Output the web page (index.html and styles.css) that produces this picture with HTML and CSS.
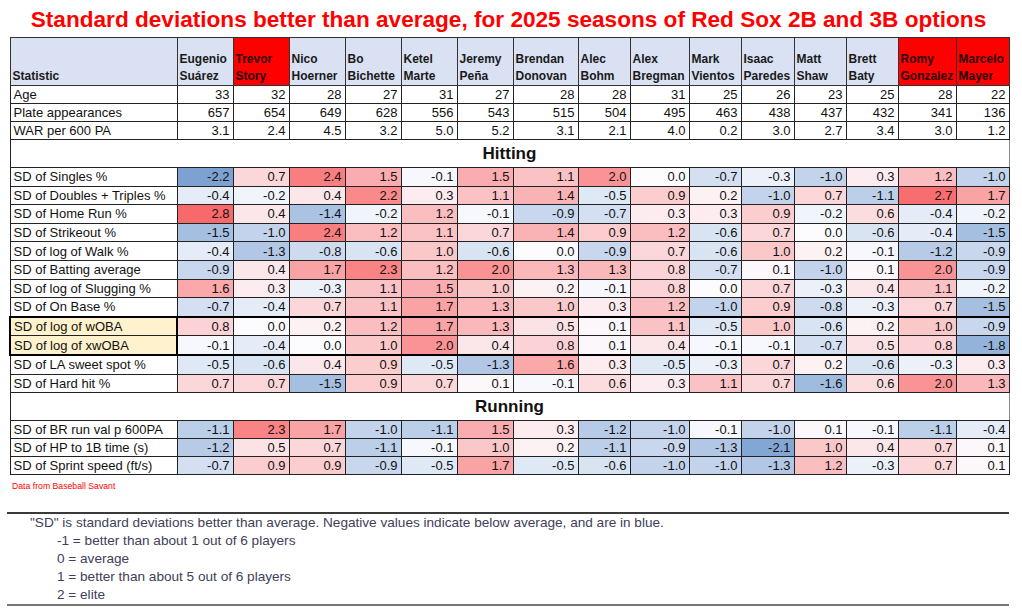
FILE: index.html
```html
<!DOCTYPE html>
<html lang="en">
<head>
<meta charset="utf-8">
<title>Red Sox 2B and 3B options</title>
<link rel="stylesheet" href="styles.css">
</head>
<body>
<div class="page">
  <h1 class="title">Standard deviations better than average, for 2025 seasons of Red Sox 2B and 3B options</h1>
  <table class="grid">
    <colgroup>
      <col class="w-stat">
      <col class="w56"><col class="w56"><col class="w56"><col class="w56"><col class="w56"><col class="w56">
      <col class="w65"><col class="w52"><col class="w59"><col class="w52"><col class="w53"><col class="w52"><col class="w52"><col class="w58"><col class="w53">
    </colgroup>
    <thead>
      <tr class="head">
        <th class="stat">Statistic</th>
        <th>Eugenio<br>Suárez</th>
        <th class="hl">Trevor<br>Story</th>
        <th>Nico<br>Hoerner</th>
        <th>Bo<br>Bichette</th>
        <th>Ketel<br>Marte</th>
        <th>Jeremy<br>Peña</th>
        <th>Brendan<br>Donovan</th>
        <th>Alec<br>Bohm</th>
        <th>Alex<br>Bregman</th>
        <th>Mark<br>Vientos</th>
        <th>Isaac<br>Paredes</th>
        <th>Matt<br>Shaw</th>
        <th>Brett<br>Baty</th>
        <th class="hl">Romy<br>Gonzalez</th>
        <th class="hl">Marcelo<br>Mayer</th>
      </tr>
    </thead>
    <tbody>
      <tr class="row"><td class="lbl">Age</td><td>33</td><td>32</td><td>28</td><td>27</td><td>31</td><td>27</td><td>28</td><td>28</td><td>31</td><td>25</td><td>26</td><td>23</td><td>25</td><td>28</td><td>22</td></tr>
      <tr class="row"><td class="lbl">Plate appearances</td><td>657</td><td>654</td><td>649</td><td>628</td><td>556</td><td>543</td><td>515</td><td>504</td><td>495</td><td>463</td><td>438</td><td>437</td><td>432</td><td>341</td><td>136</td></tr>
      <tr class="row"><td class="lbl">WAR per 600 PA</td><td>3.1</td><td>2.4</td><td>4.5</td><td>3.2</td><td>5.0</td><td>5.2</td><td>3.1</td><td>2.1</td><td>4.0</td><td>0.2</td><td>3.0</td><td>2.7</td><td>3.4</td><td>3.0</td><td>1.2</td></tr>
      <tr class="sec"><td colspan="16">Hitting</td></tr>
      <tr class="row hrow" data-scale="2.8"><td class="lbl">SD of Singles %</td><td>-2.2</td><td>0.7</td><td>2.4</td><td>1.5</td><td>-0.1</td><td>1.5</td><td>1.1</td><td>2.0</td><td>0.0</td><td>-0.7</td><td>-0.3</td><td>-1.0</td><td>0.3</td><td>1.2</td><td>-1.0</td></tr>
      <tr class="row hrow" data-scale="2.8"><td class="lbl">SD of Doubles + Triples %</td><td>-0.4</td><td>-0.2</td><td>0.4</td><td>2.2</td><td>0.3</td><td>1.1</td><td>1.4</td><td>-0.5</td><td>0.9</td><td>0.2</td><td>-1.0</td><td>0.7</td><td>-1.1</td><td>2.7</td><td>1.7</td></tr>
      <tr class="row hrow" data-scale="2.8"><td class="lbl">SD of Home Run %</td><td>2.8</td><td>0.4</td><td>-1.4</td><td>-0.2</td><td>1.2</td><td>-0.1</td><td>-0.9</td><td>-0.7</td><td>0.3</td><td>0.3</td><td>0.9</td><td>-0.2</td><td>0.6</td><td>-0.4</td><td>-0.2</td></tr>
      <tr class="row hrow" data-scale="2.8"><td class="lbl">SD of Strikeout %</td><td>-1.5</td><td>-1.0</td><td>2.4</td><td>1.2</td><td>1.1</td><td>0.7</td><td>1.4</td><td>0.9</td><td>1.2</td><td>-0.6</td><td>0.7</td><td>0.0</td><td>-0.6</td><td>-0.4</td><td>-1.5</td></tr>
      <tr class="row hrow" data-scale="2.8"><td class="lbl">SD of log of Walk %</td><td>-0.4</td><td>-1.3</td><td>-0.8</td><td>-0.6</td><td>1.0</td><td>-0.6</td><td>0.0</td><td>-0.9</td><td>0.7</td><td>-0.6</td><td>1.0</td><td>0.2</td><td>-0.1</td><td>-1.2</td><td>-0.9</td></tr>
      <tr class="row hrow" data-scale="2.8"><td class="lbl">SD of Batting average</td><td>-0.9</td><td>0.4</td><td>1.7</td><td>2.3</td><td>1.2</td><td>2.0</td><td>1.3</td><td>1.3</td><td>0.8</td><td>-0.7</td><td>0.1</td><td>-1.0</td><td>0.1</td><td>2.0</td><td>-0.9</td></tr>
      <tr class="row hrow" data-scale="2.8"><td class="lbl">SD of log of Slugging %</td><td>1.6</td><td>0.3</td><td>-0.3</td><td>1.1</td><td>1.5</td><td>1.0</td><td>0.2</td><td>-0.1</td><td>0.8</td><td>0.0</td><td>0.7</td><td>-0.3</td><td>0.4</td><td>1.1</td><td>-0.2</td></tr>
      <tr class="row hrow" data-scale="2.8"><td class="lbl">SD of On Base %</td><td>-0.7</td><td>-0.4</td><td>0.7</td><td>1.1</td><td>1.7</td><td>1.3</td><td>1.0</td><td>0.3</td><td>1.2</td><td>-1.0</td><td>0.9</td><td>-0.8</td><td>-0.3</td><td>0.7</td><td>-1.5</td></tr>
      <tr class="row hrow key key-top" data-scale="2.8"><td class="lbl">SD of log of wOBA</td><td>0.8</td><td>0.0</td><td>0.2</td><td>1.2</td><td>1.7</td><td>1.3</td><td>0.5</td><td>0.1</td><td>1.1</td><td>-0.5</td><td>1.0</td><td>-0.6</td><td>0.2</td><td>1.0</td><td>-0.9</td></tr>
      <tr class="row hrow key key-bot" data-scale="2.8"><td class="lbl">SD of log of xwOBA</td><td>-0.1</td><td>-0.4</td><td>0.0</td><td>1.0</td><td>2.0</td><td>0.4</td><td>0.8</td><td>0.1</td><td>0.4</td><td>-0.1</td><td>-0.1</td><td>-0.7</td><td>0.5</td><td>0.8</td><td>-1.8</td></tr>
      <tr class="row hrow" data-scale="2.8"><td class="lbl">SD of LA sweet spot %</td><td>-0.5</td><td>-0.6</td><td>0.4</td><td>0.9</td><td>-0.5</td><td>-1.3</td><td>1.6</td><td>0.3</td><td>-0.5</td><td>-0.3</td><td>0.7</td><td>0.2</td><td>-0.6</td><td>-0.3</td><td>0.3</td></tr>
      <tr class="row hrow" data-scale="2.8"><td class="lbl">SD of Hard hit %</td><td>0.7</td><td>0.7</td><td>-1.5</td><td>0.9</td><td>0.7</td><td>0.1</td><td>-0.1</td><td>0.6</td><td>0.3</td><td>1.1</td><td>0.7</td><td>-1.6</td><td>0.6</td><td>2.0</td><td>1.3</td></tr>
      <tr class="sec"><td colspan="16">Running</td></tr>
      <tr class="row rrow" data-scale="2.8"><td class="lbl">SD of BR run val p 600PA</td><td>-1.1</td><td>2.3</td><td>1.7</td><td>-1.0</td><td>-1.1</td><td>1.5</td><td>0.3</td><td>-1.2</td><td>-1.0</td><td>-0.1</td><td>-1.0</td><td>0.1</td><td>-0.1</td><td>-1.1</td><td>-0.4</td></tr>
      <tr class="row rrow" data-scale="2.8"><td class="lbl">SD of HP to 1B time (s)</td><td>-1.2</td><td>0.5</td><td>0.7</td><td>-1.1</td><td>-0.1</td><td>1.0</td><td>0.2</td><td>-1.1</td><td>-0.9</td><td>-1.3</td><td>-2.1</td><td>1.0</td><td>0.4</td><td>0.7</td><td>0.1</td></tr>
      <tr class="row rrow" data-scale="2.8"><td class="lbl">SD of Sprint speed (ft/s)</td><td>-0.7</td><td>0.9</td><td>0.9</td><td>-0.9</td><td>-0.5</td><td>1.7</td><td>-0.5</td><td>-0.6</td><td>-1.0</td><td>-1.0</td><td>-1.3</td><td>1.2</td><td>-0.3</td><td>0.7</td><td>0.1</td></tr>
    </tbody>
  </table>
  <p class="source">Data from Baseball Savant</p>
  <div class="notes">
    <p>"SD" is standard deviations better than average. Negative values indicate below average, and are in blue.</p>
    <p class="ind">-1 = better than about 1 out of 6 players</p>
    <p class="ind">0 = average</p>
    <p class="ind">1 = better than about 5 out of 6 players</p>
    <p class="ind">2 = elite</p>
  </div>
</div>
<script src="script.js"></script>
</body>
</html>
```
FILE: styles.css
```css
html, body {
  margin: 0;
  padding: 0;
  background: #ffffff;
}

body {
  font-family: "Liberation Sans", Arial, sans-serif;
  color: #000;
}

.page {
  padding-left: 9px;
  width: 1004px;
}

.title {
  margin: 0;
  width: 999px;
  height: 37px;
  line-height: 40px;
  text-align: center;
  font-size: 22.6px;
  font-weight: bold;
  color: #ff0000;
  white-space: nowrap;
}

.grid {
  border-collapse: collapse;
  table-layout: fixed;
  width: 999px;
  font-size: 13px;
  color: #111;
}

.w-stat { width: 167px; }
.w56 { width: 56px; }
.w65 { width: 65px; }
.w52 { width: 52px; }
.w59 { width: 59px; }
.w53 { width: 53px; }
.w58 { width: 58px; }

.grid th,
.grid td {
  border: 1px solid #222;
  padding: 0 2px;
  white-space: nowrap;
  overflow: hidden;
}

.head th {
  height: 47px;
  background: #d9e1f2;
  text-align: left;
  vertical-align: bottom;
  font-weight: bold;
  font-size: 12px;
  line-height: 17px;
  padding: 0 1px 0 2px;
  border-color: #333;
  color: #1a1a1a;
}

.head th.hl {
  background: #ff0000;
  color: #2a0000;
}

.row td {
  height: 17px;
  line-height: 17px;
  padding: 0 3px 0 2px;
  text-align: right;
  background: #fff;
}

.row.hrow td {
  height: 17.6px;
}

.row td.lbl {
  text-align: left;
  padding-left: 3px;
}

.sec td {
  height: 26px;
  text-align: center;
  font-weight: bold;
  font-size: 17px;
  line-height: 26px;
  padding-top: 1px;
  border-right-color: #888;
}

.key-top td {
  border-top: 2px solid #000;
}

.key-bot td {
  border-bottom: 2px solid #000;
}

.row.key td.lbl {
  background: #fff2cc;
  border-left: 2px solid #000;
  border-right: 2px solid #000;
}

.source {
  margin: 5px 0 0 3px;
  font-size: 8.7px;
  line-height: 12px;
  color: #ff0000;
}

.notes {
  margin: 20px 0 0 -2px;
  width: 1002px;
  border-top: 2px solid #3a3a3a;
  border-bottom: 2px solid #777;
  color: #40405a;
  font-size: 13.6px;
}

.notes p {
  margin: 0;
  line-height: 18px;
  padding-left: 23px;
  white-space: nowrap;
}

.notes p.ind {
  padding-left: 50px;
}
```
FILE: script.js
```js
(function () {
  var mid = [252, 252, 255];
  var red = [248, 105, 107];
  var blue = [90, 138, 198];
  function mix(a, b, t) {
    t = Math.min(1, Math.max(0, t));
    return [0, 1, 2].map(function (i) {
      return Math.round(a[i] + (b[i] - a[i]) * t);
    });
  }
  var rows = document.querySelectorAll('tr[data-scale]');
  rows.forEach(function (tr) {
    var scale = parseFloat(tr.getAttribute('data-scale'));
    var cells = tr.querySelectorAll('td:not(.lbl)');
    cells.forEach(function (td) {
      var v = parseFloat(td.textContent);
      var c = v >= 0 ? mix(mid, red, v / scale) : mix(mid, blue, -v / scale);
      td.style.backgroundColor = 'rgb(' + c.join(',') + ')';
    });
  });
})();
```
